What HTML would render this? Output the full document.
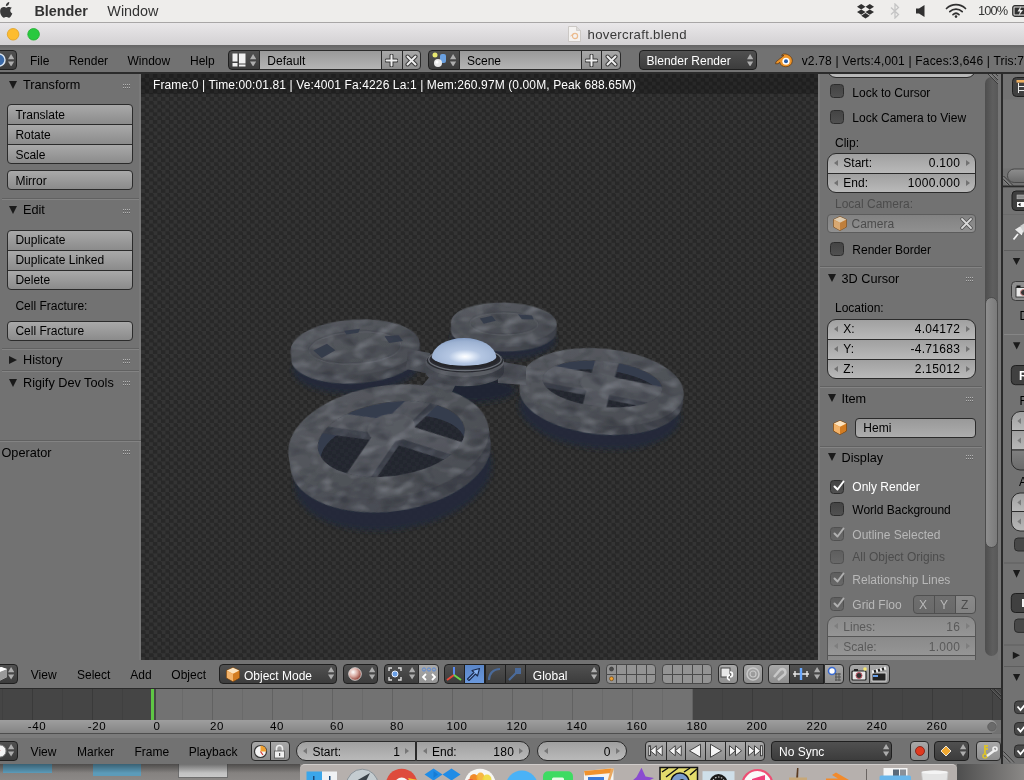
<!DOCTYPE html>
<html><head><meta charset="utf-8"><title>Blender</title>
<style>
*{box-sizing:border-box;margin:0;padding:0}
html,body{width:1024px;height:780px;overflow:hidden;background:#727272;font-family:"Liberation Sans",sans-serif;font-size:12px;color:#000}
.a{position:absolute}
.t{position:absolute;white-space:nowrap;line-height:14px;font-size:12px;color:#000}
.w{color:#fff}
.g{color:#4c4c4c}
.lg{color:#b8b8b8}
#menubar{left:0;top:0;width:1024px;height:22px;background:#ebebeb}
#titlebar{left:0;top:22px;width:1024px;height:24px;background:linear-gradient(#e9e7e9,#d2d0d2)}
#vp{background:repeating-conic-gradient(#282828 0 25%,#343434 0 50%) 0.13px 0/8.12px 7.68px}
.btn{border:1px solid #2b2b2b;background:linear-gradient(#a9a9a9,#8b8b8b)}
.num{border:1px solid #2b2b2b;background:linear-gradient(#a0a0a0,#b9b9b9)}
.dark{border:1px solid #1f1f1f;background:linear-gradient(#505050,#3c3c3c)}
.hl{height:2px !important;background:linear-gradient(#616161 50%,#838383 50%)}
.g2{color:#5a5a5a}

</style></head><body><div id="root" style="position:absolute;left:0;top:0;width:1024px;height:780px;overflow:hidden;will-change:transform">
<div class="a " style="left:0px;top:0px;width:1024px;height:22px;background:#eeedeb"></div>
<div class="a " style="left:0px;top:22px;width:1024px;height:1px;background:#a8a6a6"></div>
<div class="a " style="left:0px;top:23px;width:1024px;height:23px;background:linear-gradient(#e9e7e9,#e2e0e2 30%,#d2d0d2)"></div>
<div class="a " style="left:0px;top:46px;width:1024px;height:26px;background:#727272"></div>
<div class="a " style="left:0px;top:72px;width:1024px;height:2px;background:#2b2b2b"></div>
<div class="a " style="left:0px;top:74px;width:141px;height:586px;background:#727272"></div>
<div id="vp" class="a" style="left:141px;top:74px;width:678px;height:586px"></div>
<svg class="a" style="left:141px;top:74px" width="678" height="586" viewBox="141 74 678 586"><defs>
<pattern id="chk" width="8.12" height="7.68" patternUnits="userSpaceOnUse" x="141.13" y="74"><rect width="8.12" height="7.68" fill="#343434"/><rect x="4.06" width="4.06" height="3.84" fill="#282828"/><rect y="3.84" width="4.06" height="3.84" fill="#282828"/></pattern>
<filter id="b2" x="-20%" y="-30%" width="140%" height="160%"><feGaussianBlur stdDeviation="2.600"/></filter>
<filter id="b1"><feGaussianBlur stdDeviation="0.700"/></filter>
<linearGradient id="topg" x1="0" y1="0" x2="1" y2="1"><stop offset="0" stop-color="#585b61"/><stop offset="0.500" stop-color="#505359"/><stop offset="1" stop-color="#4a4d53"/></linearGradient>
<linearGradient id="sideg" x1="0" y1="0" x2="1" y2="0"><stop offset="0" stop-color="#50535a"/><stop offset="0.500" stop-color="#484b52"/><stop offset="1" stop-color="#3c3f47"/></linearGradient>
<linearGradient id="spk" x1="0" y1="0" x2="0" y2="1"><stop offset="0" stop-color="#5c5f66"/><stop offset="1" stop-color="#4e5158"/></linearGradient>
<radialGradient id="dome" cx="0.515" cy="0.670" r="0.720"><stop offset="0" stop-color="#ffffff"/><stop offset="0.120" stop-color="#e8f0fb"/><stop offset="0.350" stop-color="#b4c6e2"/><stop offset="0.750" stop-color="#9db2d2"/><stop offset="1" stop-color="#7d96be"/></radialGradient>
<filter id="mot" x="-5%" y="-5%" width="110%" height="110%" color-interpolation-filters="sRGB"><feTurbulence type="fractalNoise" baseFrequency="0.050 0.090" numOctaves="2" seed="11" result="n"/><feColorMatrix in="n" type="matrix" values="0 0 0 0 0.800  0 0 0 0 0.820  0 0 0 0 0.860  0.700 0 0 0 -0.340" result="w"/><feComposite in="w" in2="SourceAlpha" operator="in" result="wm"/><feColorMatrix in="n" type="matrix" values="0 0 0 0 0.080  0 0 0 0 0.090  0 0 0 0 0.130  0 0.800 0 0 -0.370" result="d"/><feComposite in="d" in2="SourceAlpha" operator="in" result="dm"/><feMerge><feMergeNode in="SourceGraphic"/><feMergeNode in="wm"/><feMergeNode in="dm"/></feMerge></filter>
</defs><g filter="url(#b1)"><g><g transform="translate(503.8,323) rotate(1)"><ellipse cx="0" cy="16" rx="52.007999999999996" ry="20.294999999999998" fill="#222a3b" opacity="0.920" filter="url(#b2)"/><g filter="url(#mot)"><path d="M-52.8,0 V8 A52.8,20.5 0 0 0 52.8,8 V0 Z" fill="url(#sideg)"/><ellipse cx="0" cy="0" rx="52.8" ry="20.5" fill="url(#topg)"/><ellipse cx="0" cy="0" rx="34" ry="11" fill="none" stroke="#44474e" stroke-width="1.500" opacity="0.600"/><ellipse cx="0" cy="1" rx="34" ry="11" fill="none" stroke="#6c6f76" stroke-width="1" opacity="0.500"/></g><polygon points="-24,-4 -12,-7 -8,-2 -20,1" fill="#333a4a" opacity="0.900"/><polygon points="14,-9 28,-8 30,-4 18,-4" fill="#333a4a" opacity="0.900"/></g><g transform="translate(355.2,347) rotate(-3.5)"><ellipse cx="0" cy="19" rx="63.63099999999999" ry="27.324" fill="#222a3b" opacity="0.920" filter="url(#b2)"/><g filter="url(#mot)"><path d="M-64.6,0 V9 A64.6,27.6 0 0 0 64.6,9 V0 Z" fill="url(#sideg)"/><ellipse cx="0" cy="0" rx="64.6" ry="27.6" fill="url(#topg)"/><ellipse cx="0" cy="0" rx="46" ry="16" fill="none" stroke="#44474e" stroke-width="1.500" opacity="0.600"/><ellipse cx="0" cy="1" rx="46" ry="16" fill="none" stroke="#6c6f76" stroke-width="1" opacity="0.500"/></g><polygon points="-42,1 -28,-5 -20,2 -34,9" fill="#333a4a" opacity="0.900"/><polygon points="30,-9 44,-9 48,-3 34,-2" fill="#333a4a" opacity="0.900"/><polygon points="-10,-17 6,-18 4,-14 -8,-13" fill="#333a4a" opacity="0.900"/></g><g transform="translate(602,387) rotate(5.5)"><ellipse cx="0" cy="24" rx="80.77" ry="38.115" fill="#222a3b" opacity="0.920" filter="url(#b2)"/><g filter="url(#mot)"><path d="M-82,0 V9 A82,38.5 0 0 0 82,9 V0 Z" fill="url(#sideg)"/></g><ellipse cx="0" cy="-3" rx="60" ry="23" fill="#343c4e"/><clipPath id="c602"><ellipse cx="0" cy="-3" rx="60" ry="23"/></clipPath><g clip-path="url(#c602)"><ellipse cx="0" cy="5.1" rx="59.1" ry="22.08" fill="url(#chk)"/><ellipse cx="0" cy="5.1" rx="59.1" ry="22.08" fill="#1a2232" opacity="0.45"/></g><g filter="url(#mot)"><g clip-path="url(#c602)"><line x1="-2" y1="1.9500000000000002" x2="-88.4" y2="-6.05" stroke="#3c404a" stroke-width="18" /><line x1="-2" y1="1.9500000000000002" x2="90.80000000000001" y2="11.55" stroke="#3c404a" stroke-width="18" /><line x1="-2" y1="1.9500000000000002" x2="4.4" y2="-30.05" stroke="#3c404a" stroke-width="23" /><line x1="-2" y1="1.9500000000000002" x2="-8.4" y2="38.75000000000001" stroke="#3c404a" stroke-width="23" /><line x1="-2" y1="-3" x2="-88.4" y2="-11.0" stroke="url(#spk)" stroke-width="18" /><line x1="-2" y1="-3" x2="90.80000000000001" y2="6.600000000000001" stroke="url(#spk)" stroke-width="18" /><line x1="-2" y1="-3" x2="4.4" y2="-35.0" stroke="url(#spk)" stroke-width="23" /><line x1="-2" y1="-3" x2="-8.4" y2="33.800000000000004" stroke="url(#spk)" stroke-width="23" /><ellipse cx="-2" cy="-3" rx="20" ry="11" fill="#585b62"/></g><path fill-rule="evenodd" d="M-82,0 A82,38.5 0 1 0 82,0 A82,38.5 0 1 0 -82,0 Z M-60,-3 A60,23 0 1 0 60,-3 A60,23 0 1 0 -60,-3 Z" fill="url(#topg)"/></g></g><ellipse cx="470" cy="390" rx="46" ry="13" fill="#1d2535" opacity="0.900" filter="url(#b2)"/><g filter="url(#mot)"><path d="M408 349 L430 353 L430 374 L406 369 Z" fill="#4e5158"/><path d="M498 361 L526 366 L526 385 L498 383 Z" fill="#4c4f56"/><path d="M432 374 L458 380 L452 392 L428 396 L422 386 Z" fill="#52555c"/><path d="M425.300 362 V372 A39.400,15 0 0 0 504,372 V362 Z" fill="url(#sideg)"/><ellipse cx="464.700" cy="362" rx="39.400" ry="15" fill="#5a5d64"/></g><g transform="translate(388.6,441.5) rotate(-8)"><ellipse cx="0" cy="33" rx="99.485" ry="55.44" fill="#222a3b" opacity="0.920" filter="url(#b2)"/><g filter="url(#mot)"><path d="M-101,0 V14 A101,56 0 0 0 101,14 V0 Z" fill="url(#sideg)"/></g><ellipse cx="3" cy="-2" rx="74" ry="37" fill="#343c4e"/><clipPath id="c388"><ellipse cx="3" cy="-2" rx="74" ry="37"/></clipPath><g clip-path="url(#c388)"><ellipse cx="3" cy="10.6" rx="72.89" ry="35.519999999999996" fill="url(#chk)"/><ellipse cx="3" cy="10.6" rx="72.89" ry="35.519999999999996" fill="#1a2232" opacity="0.45"/></g><g filter="url(#mot)"><g clip-path="url(#c388)"><line x1="4.5" y1="-5.499999999999998" x2="-83.66000000000001" y2="-30.46" stroke="#3c404a" stroke-width="15" /><line x1="4.5" y1="-5.499999999999998" x2="93.30000000000001" y2="36.900000000000006" stroke="#3c404a" stroke-width="15" /><line x1="4.5" y1="-5.499999999999998" x2="59.379999999999995" y2="-45.5" stroke="#3c404a" stroke-width="19" /><line x1="4.5" y1="-5.499999999999998" x2="-53.74" y2="58.5" stroke="#3c404a" stroke-width="22" /><line x1="4.5" y1="-13.2" x2="-83.66000000000001" y2="-38.160000000000004" stroke="url(#spk)" stroke-width="15" /><line x1="4.5" y1="-13.2" x2="93.30000000000001" y2="29.200000000000006" stroke="url(#spk)" stroke-width="15" /><line x1="4.5" y1="-13.2" x2="59.379999999999995" y2="-53.2" stroke="url(#spk)" stroke-width="19" /><line x1="4.5" y1="-13.2" x2="-53.74" y2="50.8" stroke="url(#spk)" stroke-width="22" /><ellipse cx="4.5" cy="-13.2" rx="24" ry="14" fill="#585b62"/></g><path fill-rule="evenodd" d="M-101,0 A101,56 0 1 0 101,0 A101,56 0 1 0 -101,0 Z M-71,-2 A74,37 0 1 0 77,-2 A74,37 0 1 0 -71,-2 Z" fill="url(#topg)"/></g></g></g><ellipse cx="465" cy="360.500" rx="38.300" ry="12" fill="#2a2c31"/><ellipse cx="465" cy="359.500" rx="36.300" ry="11" fill="none" stroke="#6a6e76" stroke-width="1.300"/><ellipse cx="465" cy="358.500" rx="34" ry="9.500" fill="#25272c"/><path d="M431.700 357 A32.400,20 0 0 1 496.400,357 A32.400,9.200 0 0 1 431.700,357 Z" fill="url(#dome)"/></g></svg>
<div class="a " style="left:141px;top:74px;width:678px;height:20px;background:rgba(0,0,0,0.22)"></div>
<div class="a " style="left:819px;top:74px;width:182px;height:586px;background:#727272"></div>
<div class="a " style="left:0px;top:660px;width:1001px;height:28px;background:#727272"></div>
<div class="a " style="left:0px;top:688px;width:1001px;height:2px;background:#2b2b2b"></div>
<div class="a " style="left:0px;top:690px;width:1001px;height:30px;background:#454545"></div>
<div class="a " style="left:0px;top:720px;width:1001px;height:14px;background:linear-gradient(#8f8f8f,#6e6e6e)"></div>
<div class="a " style="left:0px;top:734px;width:1001px;height:30px;background:#727272"></div>
<div class="a " style="left:0px;top:764px;width:1024px;height:16px;background:#7f7d7c"></div>
<div class="a " style="left:1001px;top:74px;width:3px;height:690px;background:#3a3a3a"></div>
<div class="a " style="left:1004px;top:74px;width:20px;height:690px;background:#727272"></div>
<div class="a " style="left:139px;top:74px;width:2px;height:586px;background:#797979"></div>
<div class="a " style="left:818px;top:74px;width:1.5px;height:586px;background:#7a7a7a"></div>
<svg class="a" style="left:9px;top:81px" width="8" height="8"><polygon points="0,0 8,0 4.0,8" fill="#1a1a1a"/></svg>
<div class="t " style="left:23px;top:78px;font-size:12.7px;">Transform</div>
<svg class="a" style="left:123px;top:84px" width="8" height="6"><rect x="0" y="0" width="1" height="1" fill="#b4b4b4"/><rect x="0" y="1" width="1" height="1" fill="#606060"/><rect x="2" y="0" width="1" height="1" fill="#b4b4b4"/><rect x="2" y="1" width="1" height="1" fill="#606060"/><rect x="4" y="0" width="1" height="1" fill="#b4b4b4"/><rect x="4" y="1" width="1" height="1" fill="#606060"/><rect x="6" y="0" width="1" height="1" fill="#b4b4b4"/><rect x="6" y="1" width="1" height="1" fill="#606060"/><rect x="0" y="3" width="1" height="1" fill="#b4b4b4"/><rect x="0" y="4" width="1" height="1" fill="#606060"/><rect x="2" y="3" width="1" height="1" fill="#b4b4b4"/><rect x="2" y="4" width="1" height="1" fill="#606060"/><rect x="4" y="3" width="1" height="1" fill="#b4b4b4"/><rect x="4" y="4" width="1" height="1" fill="#606060"/><rect x="6" y="3" width="1" height="1" fill="#b4b4b4"/><rect x="6" y="4" width="1" height="1" fill="#606060"/></svg>
<div class="a btn" style="left:7px;top:104px;width:126px;height:21px;border-radius:4px 4px 0 0;"></div>
<div class="t " style="left:15.4px;top:108px;font-size:12px;">Translate</div>
<div class="a btn" style="left:7px;top:124px;width:126px;height:21px;border-radius:0;"></div>
<div class="t " style="left:15.4px;top:128px;font-size:12px;">Rotate</div>
<div class="a btn" style="left:7px;top:144px;width:126px;height:20px;border-radius:0 0 4px 4px;"></div>
<div class="t " style="left:15.4px;top:148px;font-size:12px;">Scale</div>
<div class="a btn" style="left:7px;top:170px;width:126px;height:20px;border-radius:4px;"></div>
<div class="t " style="left:15.4px;top:174px;font-size:12px;">Mirror</div>
<div class="a hl" style="left:2px;top:198px;width:137px;height:1px;"></div>
<svg class="a" style="left:9px;top:206px" width="8" height="8"><polygon points="0,0 8,0 4.0,8" fill="#1a1a1a"/></svg>
<div class="t " style="left:23px;top:203px;font-size:12.7px;">Edit</div>
<svg class="a" style="left:123px;top:209px" width="8" height="6"><rect x="0" y="0" width="1" height="1" fill="#b4b4b4"/><rect x="0" y="1" width="1" height="1" fill="#606060"/><rect x="2" y="0" width="1" height="1" fill="#b4b4b4"/><rect x="2" y="1" width="1" height="1" fill="#606060"/><rect x="4" y="0" width="1" height="1" fill="#b4b4b4"/><rect x="4" y="1" width="1" height="1" fill="#606060"/><rect x="6" y="0" width="1" height="1" fill="#b4b4b4"/><rect x="6" y="1" width="1" height="1" fill="#606060"/><rect x="0" y="3" width="1" height="1" fill="#b4b4b4"/><rect x="0" y="4" width="1" height="1" fill="#606060"/><rect x="2" y="3" width="1" height="1" fill="#b4b4b4"/><rect x="2" y="4" width="1" height="1" fill="#606060"/><rect x="4" y="3" width="1" height="1" fill="#b4b4b4"/><rect x="4" y="4" width="1" height="1" fill="#606060"/><rect x="6" y="3" width="1" height="1" fill="#b4b4b4"/><rect x="6" y="4" width="1" height="1" fill="#606060"/></svg>
<div class="a btn" style="left:7px;top:229.5px;width:126px;height:21px;border-radius:4px 4px 0 0;"></div>
<div class="t " style="left:15.4px;top:233px;font-size:12px;">Duplicate</div>
<div class="a btn" style="left:7px;top:249.5px;width:126px;height:21px;border-radius:0;"></div>
<div class="t " style="left:15.4px;top:253px;font-size:12px;">Duplicate Linked</div>
<div class="a btn" style="left:7px;top:269.5px;width:126px;height:20px;border-radius:0 0 4px 4px;"></div>
<div class="t " style="left:15.4px;top:273px;font-size:12px;">Delete</div>
<div class="t " style="left:15.4px;top:299px;font-size:12px;">Cell Fracture:</div>
<div class="a btn" style="left:7px;top:320.5px;width:126px;height:20px;border-radius:4px;"></div>
<div class="t " style="left:15.4px;top:324px;font-size:12px;">Cell Fracture</div>
<div class="a hl" style="left:2px;top:348px;width:137px;height:1px;"></div>
<svg class="a" style="left:9px;top:356px" width="8" height="8"><polygon points="0,0 8,4.0 0,8" fill="#1a1a1a"/></svg>
<div class="t " style="left:23px;top:353px;font-size:12.7px;">History</div>
<svg class="a" style="left:123px;top:359px" width="8" height="6"><rect x="0" y="0" width="1" height="1" fill="#b4b4b4"/><rect x="0" y="1" width="1" height="1" fill="#606060"/><rect x="2" y="0" width="1" height="1" fill="#b4b4b4"/><rect x="2" y="1" width="1" height="1" fill="#606060"/><rect x="4" y="0" width="1" height="1" fill="#b4b4b4"/><rect x="4" y="1" width="1" height="1" fill="#606060"/><rect x="6" y="0" width="1" height="1" fill="#b4b4b4"/><rect x="6" y="1" width="1" height="1" fill="#606060"/><rect x="0" y="3" width="1" height="1" fill="#b4b4b4"/><rect x="0" y="4" width="1" height="1" fill="#606060"/><rect x="2" y="3" width="1" height="1" fill="#b4b4b4"/><rect x="2" y="4" width="1" height="1" fill="#606060"/><rect x="4" y="3" width="1" height="1" fill="#b4b4b4"/><rect x="4" y="4" width="1" height="1" fill="#606060"/><rect x="6" y="3" width="1" height="1" fill="#b4b4b4"/><rect x="6" y="4" width="1" height="1" fill="#606060"/></svg>
<div class="a hl" style="left:2px;top:370px;width:137px;height:1px;"></div>
<svg class="a" style="left:9px;top:379px" width="8" height="8"><polygon points="0,0 8,0 4.0,8" fill="#1a1a1a"/></svg>
<div class="t " style="left:23px;top:376px;font-size:12.7px;">Rigify Dev Tools</div>
<svg class="a" style="left:123px;top:381px" width="8" height="6"><rect x="0" y="0" width="1" height="1" fill="#b4b4b4"/><rect x="0" y="1" width="1" height="1" fill="#606060"/><rect x="2" y="0" width="1" height="1" fill="#b4b4b4"/><rect x="2" y="1" width="1" height="1" fill="#606060"/><rect x="4" y="0" width="1" height="1" fill="#b4b4b4"/><rect x="4" y="1" width="1" height="1" fill="#606060"/><rect x="6" y="0" width="1" height="1" fill="#b4b4b4"/><rect x="6" y="1" width="1" height="1" fill="#606060"/><rect x="0" y="3" width="1" height="1" fill="#b4b4b4"/><rect x="0" y="4" width="1" height="1" fill="#606060"/><rect x="2" y="3" width="1" height="1" fill="#b4b4b4"/><rect x="2" y="4" width="1" height="1" fill="#606060"/><rect x="4" y="3" width="1" height="1" fill="#b4b4b4"/><rect x="4" y="4" width="1" height="1" fill="#606060"/><rect x="6" y="3" width="1" height="1" fill="#b4b4b4"/><rect x="6" y="4" width="1" height="1" fill="#606060"/></svg>
<div class="a hl" style="left:0px;top:440px;width:141px;height:1px;"></div>
<div class="t " style="left:1.5px;top:446px;font-size:12.7px;">Operator</div>
<svg class="a" style="left:123px;top:450px" width="8" height="6"><rect x="0" y="0" width="1" height="1" fill="#b4b4b4"/><rect x="0" y="1" width="1" height="1" fill="#606060"/><rect x="2" y="0" width="1" height="1" fill="#b4b4b4"/><rect x="2" y="1" width="1" height="1" fill="#606060"/><rect x="4" y="0" width="1" height="1" fill="#b4b4b4"/><rect x="4" y="1" width="1" height="1" fill="#606060"/><rect x="6" y="0" width="1" height="1" fill="#b4b4b4"/><rect x="6" y="1" width="1" height="1" fill="#606060"/><rect x="0" y="3" width="1" height="1" fill="#b4b4b4"/><rect x="0" y="4" width="1" height="1" fill="#606060"/><rect x="2" y="3" width="1" height="1" fill="#b4b4b4"/><rect x="2" y="4" width="1" height="1" fill="#606060"/><rect x="4" y="3" width="1" height="1" fill="#b4b4b4"/><rect x="4" y="4" width="1" height="1" fill="#606060"/><rect x="6" y="3" width="1" height="1" fill="#b4b4b4"/><rect x="6" y="4" width="1" height="1" fill="#606060"/></svg>
<div class="a num" style="left:827px;top:58px;width:149px;height:20px;border-radius:9px;"></div>
<div class="t " style="left:843.3px;top:62px;font-size:12px;"></div>
<div class="t " style="right:63.799999999999955px;top:62px;font-size:12px;letter-spacing:0.3px;"></div>
<svg class="a" style="left:833.5px;top:65px" width="4" height="6"><polygon points="4,0 4,6 0,3" fill="#727272"/></svg>
<svg class="a" style="left:965.5px;top:65px" width="4" height="6"><polygon points="0,0 0,6 4,3" fill="#727272"/></svg>
<div class="a " style="left:830px;top:84px;width:14px;height:14px;background:linear-gradient(#444,#505050);border:1px solid #2c2c2c;border-radius:3.5px;"></div>
<div class="t " style="left:852.3px;top:86px;font-size:12px;">Lock to Cursor</div>
<div class="a " style="left:830px;top:110px;width:14px;height:14px;background:linear-gradient(#444,#505050);border:1px solid #2c2c2c;border-radius:3.5px;"></div>
<div class="t " style="left:852.3px;top:111px;font-size:12px;">Lock Camera to View</div>
<div class="t " style="left:835px;top:136px;font-size:12px;">Clip:</div>
<div class="a num" style="left:827px;top:152.5px;width:149px;height:21px;border-radius:9px 9px 0 0;"></div>
<div class="t " style="left:843.3px;top:156px;font-size:12px;">Start:</div>
<div class="t " style="right:63.799999999999955px;top:156px;font-size:12px;letter-spacing:0.3px;">0.100</div>
<svg class="a" style="left:833.5px;top:159.5px" width="4" height="6"><polygon points="4,0 4,6 0,3" fill="#727272"/></svg>
<svg class="a" style="left:965.5px;top:159.5px" width="4" height="6"><polygon points="0,0 0,6 4,3" fill="#727272"/></svg>
<div class="a num" style="left:827px;top:172.5px;width:149px;height:20px;border-radius:0 0 9px 9px;"></div>
<div class="t " style="left:843.3px;top:176px;font-size:12px;">End:</div>
<div class="t " style="right:63.799999999999955px;top:176px;font-size:12px;letter-spacing:0.3px;">1000.000</div>
<svg class="a" style="left:833.5px;top:179.5px" width="4" height="6"><polygon points="4,0 4,6 0,3" fill="#727272"/></svg>
<svg class="a" style="left:965.5px;top:179.5px" width="4" height="6"><polygon points="0,0 0,6 4,3" fill="#727272"/></svg>
<div class="t g" style="left:835px;top:197px;font-size:12px;">Local Camera:</div>
<div class="a " style="left:827px;top:213.5px;width:149px;height:19px;border:1px solid #5c5c5c;border-radius:4px;background:linear-gradient(#828282,#909090)"></div>
<svg class="a" style="left:833px;top:216px;opacity:0.75" width="14" height="15" viewBox="0 0 14 15"><polygon points="7,0.5 13.5,3.5 13.5,11 7,14.5 0.5,11 0.5,3.5" fill="#e8953a" stroke="#7a4a18" stroke-width="1"/><polygon points="7,0.8 13.2,3.6 7,6.8 0.8,3.6" fill="#fbe3c0"/><polygon points="0.8,3.9 7,7 7,14.2 0.8,10.8" fill="#f3b36a"/><polygon points="7,7 13.2,3.9 13.2,10.8 7,14.2" fill="#d27c22"/></svg>
<div class="t g" style="left:851.5px;top:217px;font-size:12px;">Camera</div>
<svg class="a" style="left:960px;top:217px" width="13" height="13" viewBox="0 0 13 13"><path d="M2 2 L11 11 M11 2 L2 11" stroke="#505050" stroke-width="3.4" stroke-linecap="round"/><path d="M2 2 L11 11 M11 2 L2 11" stroke="#d8d8d8" stroke-width="1.8" stroke-linecap="round"/></svg>
<div class="a " style="left:830px;top:242px;width:14px;height:14px;background:linear-gradient(#444,#505050);border:1px solid #2c2c2c;border-radius:3.5px;"></div>
<div class="t " style="left:852.3px;top:243px;font-size:12px;">Render Border</div>
<div class="a hl" style="left:820px;top:266px;width:162px;height:1px;"></div>
<svg class="a" style="left:828px;top:274px" width="8" height="8"><polygon points="0,0 8,0 4.0,8" fill="#1a1a1a"/></svg>
<div class="t " style="left:841.5px;top:272px;font-size:12.7px;">3D Cursor</div>
<svg class="a" style="left:966px;top:277px" width="8" height="6"><rect x="0" y="0" width="1" height="1" fill="#b4b4b4"/><rect x="0" y="1" width="1" height="1" fill="#606060"/><rect x="2" y="0" width="1" height="1" fill="#b4b4b4"/><rect x="2" y="1" width="1" height="1" fill="#606060"/><rect x="4" y="0" width="1" height="1" fill="#b4b4b4"/><rect x="4" y="1" width="1" height="1" fill="#606060"/><rect x="6" y="0" width="1" height="1" fill="#b4b4b4"/><rect x="6" y="1" width="1" height="1" fill="#606060"/><rect x="0" y="3" width="1" height="1" fill="#b4b4b4"/><rect x="0" y="4" width="1" height="1" fill="#606060"/><rect x="2" y="3" width="1" height="1" fill="#b4b4b4"/><rect x="2" y="4" width="1" height="1" fill="#606060"/><rect x="4" y="3" width="1" height="1" fill="#b4b4b4"/><rect x="4" y="4" width="1" height="1" fill="#606060"/><rect x="6" y="3" width="1" height="1" fill="#b4b4b4"/><rect x="6" y="4" width="1" height="1" fill="#606060"/></svg>
<div class="t " style="left:835px;top:301px;font-size:12px;">Location:</div>
<div class="a num" style="left:827px;top:318.5px;width:149px;height:21px;border-radius:9px 9px 0 0;"></div>
<div class="t " style="left:843.3px;top:322px;font-size:12px;">X:</div>
<div class="t " style="right:63.799999999999955px;top:322px;font-size:12px;letter-spacing:0.3px;">4.04172</div>
<svg class="a" style="left:833.5px;top:325.5px" width="4" height="6"><polygon points="4,0 4,6 0,3" fill="#727272"/></svg>
<svg class="a" style="left:965.5px;top:325.5px" width="4" height="6"><polygon points="0,0 0,6 4,3" fill="#727272"/></svg>
<div class="a num" style="left:827px;top:338.5px;width:149px;height:21px;border-radius:0;"></div>
<div class="t " style="left:843.3px;top:342px;font-size:12px;">Y:</div>
<div class="t " style="right:63.799999999999955px;top:342px;font-size:12px;letter-spacing:0.3px;">-4.71683</div>
<svg class="a" style="left:833.5px;top:345.5px" width="4" height="6"><polygon points="4,0 4,6 0,3" fill="#727272"/></svg>
<svg class="a" style="left:965.5px;top:345.5px" width="4" height="6"><polygon points="0,0 0,6 4,3" fill="#727272"/></svg>
<div class="a num" style="left:827px;top:358.5px;width:149px;height:20px;border-radius:0 0 9px 9px;"></div>
<div class="t " style="left:843.3px;top:362px;font-size:12px;">Z:</div>
<div class="t " style="right:63.799999999999955px;top:362px;font-size:12px;letter-spacing:0.3px;">2.15012</div>
<svg class="a" style="left:833.5px;top:365.5px" width="4" height="6"><polygon points="4,0 4,6 0,3" fill="#727272"/></svg>
<svg class="a" style="left:965.5px;top:365.5px" width="4" height="6"><polygon points="0,0 0,6 4,3" fill="#727272"/></svg>
<div class="a hl" style="left:820px;top:386px;width:162px;height:1px;"></div>
<svg class="a" style="left:828px;top:394px" width="8" height="8"><polygon points="0,0 8,0 4.0,8" fill="#1a1a1a"/></svg>
<div class="t " style="left:841.5px;top:392px;font-size:12.7px;">Item</div>
<svg class="a" style="left:966px;top:397px" width="8" height="6"><rect x="0" y="0" width="1" height="1" fill="#b4b4b4"/><rect x="0" y="1" width="1" height="1" fill="#606060"/><rect x="2" y="0" width="1" height="1" fill="#b4b4b4"/><rect x="2" y="1" width="1" height="1" fill="#606060"/><rect x="4" y="0" width="1" height="1" fill="#b4b4b4"/><rect x="4" y="1" width="1" height="1" fill="#606060"/><rect x="6" y="0" width="1" height="1" fill="#b4b4b4"/><rect x="6" y="1" width="1" height="1" fill="#606060"/><rect x="0" y="3" width="1" height="1" fill="#b4b4b4"/><rect x="0" y="4" width="1" height="1" fill="#606060"/><rect x="2" y="3" width="1" height="1" fill="#b4b4b4"/><rect x="2" y="4" width="1" height="1" fill="#606060"/><rect x="4" y="3" width="1" height="1" fill="#b4b4b4"/><rect x="4" y="4" width="1" height="1" fill="#606060"/><rect x="6" y="3" width="1" height="1" fill="#b4b4b4"/><rect x="6" y="4" width="1" height="1" fill="#606060"/></svg>
<svg class="a" style="left:833px;top:420px;opacity:1" width="14" height="15" viewBox="0 0 14 15"><polygon points="7,0.5 13.5,3.5 13.5,11 7,14.5 0.5,11 0.5,3.5" fill="#e8953a" stroke="#7a4a18" stroke-width="1"/><polygon points="7,0.8 13.2,3.6 7,6.8 0.8,3.6" fill="#fbe3c0"/><polygon points="0.8,3.9 7,7 7,14.2 0.8,10.8" fill="#f3b36a"/><polygon points="7,7 13.2,3.9 13.2,10.8 7,14.2" fill="#d27c22"/></svg>
<div class="a " style="left:855px;top:417.5px;width:121px;height:20px;border:1px solid #2b2b2b;border-radius:4px;background:linear-gradient(#999,#adadad)"></div>
<div class="t " style="left:863.3px;top:421px;font-size:12px;">Hemi</div>
<div class="a hl" style="left:820px;top:446px;width:162px;height:1px;"></div>
<svg class="a" style="left:828px;top:452.5px" width="8" height="8"><polygon points="0,0 8,0 4.0,8" fill="#1a1a1a"/></svg>
<div class="t " style="left:841.5px;top:451px;font-size:12.7px;">Display</div>
<svg class="a" style="left:966px;top:455px" width="8" height="6"><rect x="0" y="0" width="1" height="1" fill="#b4b4b4"/><rect x="0" y="1" width="1" height="1" fill="#606060"/><rect x="2" y="0" width="1" height="1" fill="#b4b4b4"/><rect x="2" y="1" width="1" height="1" fill="#606060"/><rect x="4" y="0" width="1" height="1" fill="#b4b4b4"/><rect x="4" y="1" width="1" height="1" fill="#606060"/><rect x="6" y="0" width="1" height="1" fill="#b4b4b4"/><rect x="6" y="1" width="1" height="1" fill="#606060"/><rect x="0" y="3" width="1" height="1" fill="#b4b4b4"/><rect x="0" y="4" width="1" height="1" fill="#606060"/><rect x="2" y="3" width="1" height="1" fill="#b4b4b4"/><rect x="2" y="4" width="1" height="1" fill="#606060"/><rect x="4" y="3" width="1" height="1" fill="#b4b4b4"/><rect x="4" y="4" width="1" height="1" fill="#606060"/><rect x="6" y="3" width="1" height="1" fill="#b4b4b4"/><rect x="6" y="4" width="1" height="1" fill="#606060"/></svg>
<div class="a " style="left:830px;top:479.5px;width:14px;height:14px;background:linear-gradient(#444,#505050);border:1px solid #2c2c2c;border-radius:3.5px;"><svg class="a" style="left:0px;top:-3px" width="16" height="16" viewBox="0 0 16 16"><path d="M3.5 8.5 L6.5 11.5 L12.5 3.5" fill="none" stroke="#fff" stroke-width="2" stroke-linecap="round" stroke-linejoin="round"/></svg></div>
<div class="t w" style="left:852.3px;top:480px;font-size:12px;">Only Render</div>
<div class="a " style="left:830px;top:501.5px;width:14px;height:14px;background:linear-gradient(#444,#505050);border:1px solid #2c2c2c;border-radius:3.5px;"></div>
<div class="t " style="left:852.3px;top:503px;font-size:12px;">World Background</div>
<div class="a " style="left:830px;top:527px;width:14px;height:14px;background:linear-gradient(#5e5e5e,#686868);border:1px solid #505050;border-radius:3.5px;"><svg class="a" style="left:0px;top:-3px" width="16" height="16" viewBox="0 0 16 16"><path d="M3.5 8.5 L6.5 11.5 L12.5 3.5" fill="none" stroke="#b0b0b0" stroke-width="2" stroke-linecap="round" stroke-linejoin="round"/></svg></div>
<div class="t lg" style="left:852.3px;top:528px;font-size:12px;">Outline Selected</div>
<div class="a " style="left:830px;top:549.5px;width:14px;height:14px;background:linear-gradient(#5e5e5e,#686868);border:1px solid #505050;border-radius:3.5px;"></div>
<div class="t g" style="left:852.3px;top:550px;font-size:12px;">All Object Origins</div>
<div class="a " style="left:830px;top:572px;width:14px;height:14px;background:linear-gradient(#5e5e5e,#686868);border:1px solid #505050;border-radius:3.5px;"><svg class="a" style="left:0px;top:-3px" width="16" height="16" viewBox="0 0 16 16"><path d="M3.5 8.5 L6.5 11.5 L12.5 3.5" fill="none" stroke="#b0b0b0" stroke-width="2" stroke-linecap="round" stroke-linejoin="round"/></svg></div>
<div class="t lg" style="left:852.3px;top:573px;font-size:12px;">Relationship Lines</div>
<div class="a " style="left:830px;top:596.5px;width:14px;height:14px;background:linear-gradient(#5e5e5e,#686868);border:1px solid #505050;border-radius:3.5px;"><svg class="a" style="left:0px;top:-3px" width="16" height="16" viewBox="0 0 16 16"><path d="M3.5 8.5 L6.5 11.5 L12.5 3.5" fill="none" stroke="#b0b0b0" stroke-width="2" stroke-linecap="round" stroke-linejoin="round"/></svg></div>
<div class="t lg" style="left:852.3px;top:598px;font-size:12px;">Grid Floo</div>
<div class="a " style="left:912.5px;top:594.5px;width:22px;height:19.5px;border:1px solid #505050;border-radius:4px 0 0 4px;background:linear-gradient(#6f6f6f,#696969)"></div>
<div class="t lg" style="left:919.0px;top:598px;font-size:12px;">X</div>
<div class="a " style="left:933.5px;top:594.5px;width:22px;height:19.5px;border:1px solid #505050;border-radius:0;background:linear-gradient(#6f6f6f,#696969)"></div>
<div class="t lg" style="left:940.0px;top:598px;font-size:12px;">Y</div>
<div class="a " style="left:954.5px;top:594.5px;width:21px;height:19.5px;border:1px solid #505050;border-radius:0 4px 4px 0;background:linear-gradient(#8a8a8a,#828282)"></div>
<div class="t g" style="left:961.0px;top:598px;font-size:12px;">Z</div>
<div class="a num" style="left:827px;top:616.3px;width:149px;height:20.5px;border-radius:9px 9px 0 0;border-color:#565656;background:linear-gradient(#8a8a8a,#959595);"></div>
<div class="t g2" style="left:843.3px;top:620px;font-size:12px;">Lines:</div>
<div class="t g2" style="right:63.799999999999955px;top:620px;font-size:12px;letter-spacing:0.3px;">16</div>
<svg class="a" style="left:833.5px;top:623.3px" width="4" height="6"><polygon points="4,0 4,6 0,3" fill="#7e7e7e"/></svg>
<svg class="a" style="left:965.5px;top:623.3px" width="4" height="6"><polygon points="0,0 0,6 4,3" fill="#7e7e7e"/></svg>
<div class="a num" style="left:827px;top:635.8px;width:149px;height:20.5px;border-radius:0;border-color:#565656;background:linear-gradient(#8a8a8a,#959595);"></div>
<div class="t g2" style="left:843.3px;top:640px;font-size:12px;">Scale:</div>
<div class="t g2" style="right:63.799999999999955px;top:640px;font-size:12px;letter-spacing:0.3px;">1.000</div>
<svg class="a" style="left:833.5px;top:642.8px" width="4" height="6"><polygon points="4,0 4,6 0,3" fill="#7e7e7e"/></svg>
<svg class="a" style="left:965.5px;top:642.8px" width="4" height="6"><polygon points="0,0 0,6 4,3" fill="#7e7e7e"/></svg>
<div class="a num" style="left:827px;top:655.3px;width:149px;height:19.5px;border-radius:0 0 9px 9px;border-color:#565656;background:linear-gradient(#8a8a8a,#959595);"></div>
<div class="t g2" style="left:843.3px;top:659px;font-size:12px;"></div>
<div class="t g2" style="right:63.799999999999955px;top:659px;font-size:12px;letter-spacing:0.3px;"></div>
<svg class="a" style="left:833.5px;top:662.3px" width="4" height="6"><polygon points="4,0 4,6 0,3" fill="#7e7e7e"/></svg>
<svg class="a" style="left:965.5px;top:662.3px" width="4" height="6"><polygon points="0,0 0,6 4,3" fill="#7e7e7e"/></svg>
<div class="a " style="left:984.5px;top:77px;width:13px;height:579px;background:linear-gradient(90deg,#4e4e4e,#5e5e5e 60%,#585858);border-radius:6.5px"></div>
<div class="a " style="left:984.5px;top:296.5px;width:13px;height:251px;background:linear-gradient(90deg,#8e8e8e,#7a7a7a);border-radius:6.5px;border:1px solid #4c4c4c"></div>
<svg class="a" style="left:986px;top:74px" width="15" height="15"><path d="M2 0 L15 13 M6 0 L15 9 M10 0 L15 5" stroke="#3a3a3a" stroke-width="1"/><path d="M3.2 0 L15 11.800 M7.200 0 L15 7.800 M11.200 0 L15 3.800" stroke="#8a8a8a" stroke-width="0.800"/></svg>
<div class="a " style="left:0px;top:45.4px;width:1024px;height:26.6px;background:linear-gradient(#646464,#727272 4px)"></div>
<div class="a " style="left:0px;top:72px;width:1024px;height:2px;background:#2b2b2b"></div>
<div class="a dark" style="left:-8px;top:50px;width:24.5px;height:19.5px;border-radius:4px;"></div>
<svg class="a" style="left:-8px;top:53px" width="14" height="14"><circle cx="7" cy="7" r="6" fill="#3b6aa8" stroke="#d8e4f0" stroke-width="1.5"/></svg>
<svg class="a" style="left:7.700000000000001px;top:53.6px" width="6.2" height="12.600000000000001"><polygon points="3.1,0 6.2,5.2 0,5.2" fill="#adadad"/><polygon points="0,7.4 6.2,7.4 3.1,12.600000000000001" fill="#adadad"/></svg>
<div class="t " style="left:30px;top:54px;font-size:12px;">File</div>
<div class="t " style="left:68.7px;top:54px;font-size:12px;">Render</div>
<div class="t " style="left:127.5px;top:54px;font-size:12px;">Window</div>
<div class="t " style="left:190px;top:54px;font-size:12px;">Help</div>
<div class="a dark" style="left:227.5px;top:50px;width:32px;height:19.5px;border-radius:4px 0 0 4px;"></div>
<svg class="a" style="left:232px;top:53px" width="14" height="14"><rect x="0.5" y="0.5" width="5" height="8" fill="#f0f0f0"/><rect x="0.5" y="10" width="5" height="3.5" fill="#f0f0f0"/><rect x="7" y="0.5" width="6.5" height="10" fill="#f0f0f0"/><rect x="7" y="11.5" width="6.5" height="2" fill="#f0f0f0"/></svg>
<svg class="a" style="left:249.9px;top:53.6px" width="6.2" height="12.600000000000001"><polygon points="3.1,0 6.2,5.2 0,5.2" fill="#adadad"/><polygon points="0,7.4 6.2,7.4 3.1,12.600000000000001" fill="#adadad"/></svg>
<div class="a " style="left:258.5px;top:50px;width:123px;height:19.5px;border:1px solid #2b2b2b;border-radius:0;background:linear-gradient(#999,#b4b4b4);"></div>
<div class="t " style="left:267.3px;top:54px;font-size:12px;">Default</div>
<div class="a " style="left:380.5px;top:50px;width:22px;height:19.5px;border:1px solid #2b2b2b;border-radius:0;background:linear-gradient(#a8a8a8,#8e8e8e);"></div>
<svg class="a" style="left:385px;top:53.5px" width="13" height="13" viewBox="0 0 13 13"><path d="M6.5 1.5 V11.5 M1.5 6.5 H11.5" stroke="#3a3a3a" stroke-width="4" stroke-linecap="round"/><path d="M6.5 1.5 V11.5 M1.5 6.5 H11.5" stroke="#eee" stroke-width="2" stroke-linecap="round"/></svg>
<div class="a " style="left:401.5px;top:50px;width:19.5px;height:19.5px;border:1px solid #2b2b2b;border-radius:0 4px 4px 0;background:linear-gradient(#a8a8a8,#8e8e8e);"></div>
<svg class="a" style="left:405px;top:53.5px" width="13" height="13" viewBox="0 0 13 13"><path d="M2.5 2.5 L10.5 10.5 M10.5 2.5 L2.5 10.5" stroke="#3a3a3a" stroke-width="4" stroke-linecap="round"/><path d="M2.5 2.5 L10.5 10.5 M10.5 2.5 L2.5 10.5" stroke="#eee" stroke-width="2" stroke-linecap="round"/></svg>
<div class="a dark" style="left:427.5px;top:50px;width:32px;height:19.5px;border-radius:4px 0 0 4px;"></div>
<svg class="a" style="left:432px;top:52px" width="16" height="16"><circle cx="3" cy="3" r="2.5" fill="#e8e870"/><rect x="8" y="2" width="6" height="9" rx="2" fill="#6aa0e0"/><circle cx="6" cy="11" r="4" fill="#e8e8e8"/><circle cx="5" cy="10" r="1.5" fill="#fff"/></svg>
<svg class="a" style="left:449.9px;top:53.6px" width="6.2" height="12.600000000000001"><polygon points="3.1,0 6.2,5.2 0,5.2" fill="#adadad"/><polygon points="0,7.4 6.2,7.4 3.1,12.600000000000001" fill="#adadad"/></svg>
<div class="a " style="left:458.5px;top:50px;width:123px;height:19.5px;border:1px solid #2b2b2b;border-radius:0;background:linear-gradient(#999,#b4b4b4);"></div>
<div class="t " style="left:467px;top:54px;font-size:12px;">Scene</div>
<div class="a " style="left:580.5px;top:50px;width:21.5px;height:19.5px;border:1px solid #2b2b2b;border-radius:0;background:linear-gradient(#a8a8a8,#8e8e8e);"></div>
<svg class="a" style="left:584.5px;top:53.5px" width="13" height="13" viewBox="0 0 13 13"><path d="M6.5 1.5 V11.5 M1.5 6.5 H11.5" stroke="#3a3a3a" stroke-width="4" stroke-linecap="round"/><path d="M6.5 1.5 V11.5 M1.5 6.5 H11.5" stroke="#eee" stroke-width="2" stroke-linecap="round"/></svg>
<div class="a " style="left:601px;top:50px;width:20px;height:19.5px;border:1px solid #2b2b2b;border-radius:0 4px 4px 0;background:linear-gradient(#a8a8a8,#8e8e8e);"></div>
<svg class="a" style="left:604.5px;top:53.5px" width="13" height="13" viewBox="0 0 13 13"><path d="M2.5 2.5 L10.5 10.5 M10.5 2.5 L2.5 10.5" stroke="#3a3a3a" stroke-width="4" stroke-linecap="round"/><path d="M2.5 2.5 L10.5 10.5 M10.5 2.5 L2.5 10.5" stroke="#eee" stroke-width="2" stroke-linecap="round"/></svg>
<div class="a dark" style="left:638.5px;top:50px;width:118px;height:19.5px;border-radius:4px;"></div>
<div class="t w" style="left:646.6px;top:54px;font-size:12px;">Blender Render</div>
<svg class="a" style="left:746.9px;top:53.6px" width="6.2" height="12.600000000000001"><polygon points="3.1,0 6.2,5.2 0,5.2" fill="#adadad"/><polygon points="0,7.4 6.2,7.4 3.1,12.600000000000001" fill="#adadad"/></svg>
<svg class="a" style="left:774.6px;top:52.800px" width="18" height="15" viewBox="0 0 18 14.500"><path d="M1 8.5 L9 2.2 L6.5 2.2 L8 0.8 L11 0.8 C15 2 17.5 4.5 17.3 8 C17 11.5 14 13.5 10.8 13.5 C7.5 13.5 5 11.5 4.8 9 L3 10.5 L0.5 10.5 Z" fill="#ee952a" stroke="#5a3410" stroke-width="0.700"/><circle cx="11" cy="8" r="3.6" fill="#fff"/><circle cx="11" cy="8" r="2" fill="#2a5fa8"/></svg>
<div class="t " style="left:801.7px;top:54px;font-size:12px;letter-spacing:0.18px;">v2.78 | Verts:4,001 | Faces:3,646 | Tris:7,254</div>
<div class="t w" style="left:153px;top:78px;font-size:12px;letter-spacing:0.115px;">Frame:0 | Time:00:01.81 | Ve:4001 Fa:4226 La:1 | Mem:260.97M (0.00M, Peak 688.65M)</div>
<svg class="a" style="left:0px;top:2px" width="14" height="17" viewBox="0 0 14 17"><path d="M9.3 0 C9.4 1.2 8.9 2.2 8.3 2.9 C7.6 3.6 6.700 4.100 5.900 4.000 C5.800 2.900 6.300 1.900 6.900 1.300 C7.600 0.500 8.600 0.050 9.300 0 Z M11.900 5.800 C10.900 6.400 10.300 7.300 10.300 8.500 C10.300 9.900 11.100 10.900 12.300 11.400 C12.000 12.300 11.600 13.100 11.000 13.900 C10.400 14.800 9.700 15.700 8.700 15.700 C7.700 15.700 7.400 15.100 6.300 15.100 C5.200 15.100 4.800 15.700 3.900 15.700 C2.900 15.700 2.200 14.800 1.500 13.800 C0.300 12.000 -0.500 8.900 0.700 6.800 C1.300 5.700 2.500 5.000 3.700 5.000 C4.700 5.000 5.600 5.700 6.200 5.700 C6.800 5.700 7.900 4.900 9.100 5.000 C9.600 5.000 11.000 5.200 11.900 5.800 Z" fill="#3a3a3a"/></svg>
<div class="t " style="left:34.4px;top:4px;font-size:14.4px;font-weight:bold;color:#333;">Blender</div>
<div class="t " style="left:107.3px;top:4px;font-size:14.4px;color:#333;">Window</div>
<svg class="a" style="left:857px;top:3.5px" width="17" height="16" viewBox="0 0 17 16"><g fill="#303030"><polygon points="4.25,0 8.5,2.7 4.25,5.4 0,2.7"/><polygon points="12.75,0 17,2.7 12.75,5.4 8.5,2.7"/><polygon points="4.25,5.4 8.5,8.1 4.25,10.8 0,8.1"/><polygon points="12.75,5.4 17,8.1 12.75,10.8 8.5,8.1"/><polygon points="4.25,11.7 8.5,9 12.75,11.7 8.5,14.4"/></g></svg>
<svg class="a" style="left:890px;top:3px" width="10" height="16" viewBox="0 0 10 16"><path d="M1 4.500 L8.500 11.500 L5 15 L5 1 L8.500 4.500 L1 11.500" fill="none" stroke="#c4c4c4" stroke-width="1.300"/></svg>
<svg class="a" style="left:916px;top:5px" width="9" height="12" viewBox="0 0 9 12"><polygon points="0,3.500 3,3.500 8.500,0 8.500,12 3,8.500 0,8.500" fill="#303030"/></svg>
<svg class="a" style="left:945px;top:3px" width="22" height="15" viewBox="0 0 22 15"><g fill="none" stroke="#303030" stroke-width="1.700" stroke-linecap="round"><path d="M1.500 5.500 A13.500 13.500 0 0 1 20.500 5.500"/><path d="M4.800 8.600 A9 9 0 0 1 17.200 8.600"/><path d="M8 11.600 A4.500 4.500 0 0 1 14 11.600"/></g><circle cx="11" cy="13.600" r="1.300" fill="#303030"/></svg>
<div class="t " style="left:978px;top:4px;font-size:12.8px;letter-spacing:-0.85px;color:#333;">100%</div>
<svg class="a" style="left:1012px;top:5px" width="14" height="12" viewBox="0 0 14 12"><rect x="0.800" y="0.800" width="20" height="10.400" rx="2" fill="none" stroke="#303030" stroke-width="1.400"/><rect x="2.500" y="2.500" width="12" height="7" fill="#303030"/><polygon points="9,1 5.500,6.500 8,6.500 6.500,11 11,5 8.300,5" fill="#ebebeb"/></svg>
<svg class="a" style="left:0px;top:23px" width="60" height="23"><circle cx="13.1" cy="11.3" r="5.800" fill="#fdbc2f" stroke="#dfa023" stroke-width="0.800"/><circle cx="33.600" cy="11.300" r="5.800" fill="#29c93f" stroke="#1dad2b" stroke-width="0.800"/></svg>
<svg class="a" style="left:568px;top:26px" width="13" height="16" viewBox="0 0 13 16"><path d="M0.500 0.500 H8.500 L12.500 4.500 V15.500 H0.500 Z" fill="#f4f2f0" stroke="#c4c0bc" stroke-width="0.800"/><path d="M8.500 0.500 V4.500 H12.500" fill="#dcdad8" stroke="#c4c0bc" stroke-width="0.600"/><circle cx="7" cy="10" r="2.600" fill="none" stroke="#ecbc90" stroke-width="1.200"/><path d="M2.500 10 L6 7.500" stroke="#ecbc90" stroke-width="1"/></svg>
<div class="t " style="left:587.5px;top:28px;font-size:13.2px;letter-spacing:0.3px;color:#383838;">hovercraft.blend</div>
<div class="a " style="left:0px;top:660px;width:1001px;height:28px;background:#727272"></div>
<div class="a dark" style="left:-8px;top:664px;width:25.5px;height:19.5px;border-radius:4px;"></div>
<svg class="a" style="left:-7px;top:667px" width="14" height="14" viewBox="0 0 14 14"><polygon points="0,3 8,0 14,2 14,10 6,14 0,11" fill="#e8e8e8"/><polygon points="6,5 14,2 14,10 6,14" fill="#9a9a9a"/><polygon points="0,3 8,0 14,2 6,5" fill="#fff"/></svg>
<svg class="a" style="left:8.200000000000001px;top:667.1px" width="6.2" height="12.600000000000001"><polygon points="3.1,0 6.2,5.2 0,5.2" fill="#adadad"/><polygon points="0,7.4 6.2,7.4 3.1,12.600000000000001" fill="#adadad"/></svg>
<div class="t " style="left:30.8px;top:668px;font-size:12px;">View</div>
<div class="t " style="left:77px;top:668px;font-size:12px;">Select</div>
<div class="t " style="left:130.3px;top:668px;font-size:12px;">Add</div>
<div class="t " style="left:171.3px;top:668px;font-size:12px;">Object</div>
<div class="a dark" style="left:219px;top:664px;width:118px;height:19.5px;border-radius:4px;"></div>
<svg class="a" style="left:225.5px;top:666.5px;opacity:1" width="14" height="15" viewBox="0 0 14 15"><polygon points="7,0.5 13.5,3.5 13.5,11 7,14.5 0.5,11 0.5,3.5" fill="#e8953a" stroke="#7a4a18" stroke-width="1"/><polygon points="7,0.8 13.2,3.6 7,6.8 0.8,3.6" fill="#fbe3c0"/><polygon points="0.8,3.9 7,7 7,14.2 0.8,10.8" fill="#f3b36a"/><polygon points="7,7 13.2,3.9 13.2,10.8 7,14.2" fill="#d27c22"/></svg>
<div class="t w" style="left:244px;top:669px;font-size:12px;">Object Mode</div>
<svg class="a" style="left:327.9px;top:667.1px" width="6.2" height="12.600000000000001"><polygon points="3.1,0 6.2,5.2 0,5.2" fill="#adadad"/><polygon points="0,7.4 6.2,7.4 3.1,12.600000000000001" fill="#adadad"/></svg>
<div class="a dark" style="left:343px;top:664px;width:35px;height:19.5px;border-radius:4px;"></div>
<svg class="a" style="left:348px;top:667px" width="14" height="14"><defs><radialGradient id="sh" cx="0.35" cy="0.35" r="0.7"><stop offset="0" stop-color="#fff"/><stop offset="0.5" stop-color="#d8a8a0"/><stop offset="1" stop-color="#8a3a30"/></radialGradient></defs><circle cx="7" cy="7" r="6.3" fill="url(#sh)" stroke="#e8e8e8" stroke-width="0.8"/></svg>
<svg class="a" style="left:368.9px;top:667.1px" width="6.2" height="12.600000000000001"><polygon points="3.1,0 6.2,5.2 0,5.2" fill="#adadad"/><polygon points="0,7.4 6.2,7.4 3.1,12.600000000000001" fill="#adadad"/></svg>
<div class="a dark" style="left:383.5px;top:664px;width:35.5px;height:19.5px;border-radius:4px 0 0 4px;"></div>
<svg class="a" style="left:388px;top:667px" width="14" height="14" viewBox="0 0 14 14"><g fill="none" stroke="#e0e0e0" stroke-width="1.4"><path d="M1 4 V1 H4"/><path d="M10 1 H13 V4"/><path d="M13 10 V13 H10"/><path d="M4 13 H1 V10"/></g><circle cx="7" cy="7" r="3" fill="#6aa0e8" stroke="#e8f0ff" stroke-width="1"/></svg>
<svg class="a" style="left:408.9px;top:667.1px" width="6.2" height="12.600000000000001"><polygon points="3.1,0 6.2,5.2 0,5.2" fill="#adadad"/><polygon points="0,7.4 6.2,7.4 3.1,12.600000000000001" fill="#adadad"/></svg>
<div class="a " style="left:418px;top:664px;width:21px;height:19.5px;border:1px solid #2b2b2b;border-radius:0 4px 4px 0;background:linear-gradient(#a8a8a8,#949494);"></div>
<svg class="a" style="left:421px;top:666px" width="16" height="16" viewBox="0 0 16 16"><g fill="none" stroke="#5a8ad8" stroke-width="1"><circle cx="3" cy="3.500" r="1.600"/><circle cx="8" cy="3.500" r="1.600"/><circle cx="13" cy="3.500" r="1.600"/></g><path d="M5 8 L2 11 L5 14 M11 8 L14 11 L11 14" fill="none" stroke="#fff" stroke-width="1.800"/></svg>
<div class="a dark" style="left:444px;top:664px;width:20.5px;height:19.5px;border-radius:4px 0 0 4px;"></div>
<svg class="a" style="left:446px;top:666px" width="16" height="16" viewBox="0 0 16 16"><path d="M8 9 V1" stroke="#5a8af0" stroke-width="2"/><path d="M8 9 L1 14" stroke="#e84a3a" stroke-width="2"/><path d="M8 9 L15 14" stroke="#6ad84a" stroke-width="2"/></svg>
<div class="a " style="left:464px;top:664px;width:21px;height:19.5px;border:1px solid #1f1f1f;background:linear-gradient(#5a86c8,#6a98dc)"></div>
<svg class="a" style="left:466px;top:666px" width="16" height="16" viewBox="0 0 16 16"><polygon points="1.500,13 3,14.500 9.500,8 11.500,10 13.500,2.500 6,4.500 8,6.500" fill="#86b0ee" stroke="#1a2a4c" stroke-width="1.100" stroke-linejoin="round"/></svg>
<div class="a dark" style="left:484.5px;top:664px;width:21px;height:19.5px;border-radius:0;"></div>
<svg class="a" style="left:487px;top:666px" width="16" height="16" viewBox="0 0 16 16"><path d="M2 14 C2 8 6 3 13 3" fill="none" stroke="#4a6a9a" stroke-width="2.200"/></svg>
<div class="a dark" style="left:504.5px;top:664px;width:21px;height:19.5px;border-radius:0;"></div>
<svg class="a" style="left:507px;top:666px" width="16" height="16" viewBox="0 0 16 16"><path d="M2 14 L9 7" stroke="#4a6a9a" stroke-width="2.200"/><rect x="8" y="2" width="6" height="6" fill="#4a6a9a"/></svg>
<div class="a dark" style="left:524.5px;top:664px;width:75.5px;height:19.5px;border-radius:0 4px 4px 0;"></div>
<div class="t w" style="left:532.8px;top:669px;font-size:12px;">Global</div>
<svg class="a" style="left:590.9px;top:667.1px" width="6.2" height="12.600000000000001"><polygon points="3.1,0 6.2,5.2 0,5.2" fill="#adadad"/><polygon points="0,7.4 6.2,7.4 3.1,12.600000000000001" fill="#adadad"/></svg>
<div class="a " style="left:606px;top:664.0px;width:11px;height:10.75px;border:1px solid #4a4a4a;border-radius:4px 0 0 0;background:#939393"></div>
<div class="a " style="left:616px;top:664.0px;width:11px;height:10.75px;border:1px solid #4a4a4a;border-radius:0;background:#939393"></div>
<div class="a " style="left:626px;top:664.0px;width:11px;height:10.75px;border:1px solid #4a4a4a;border-radius:0;background:#939393"></div>
<div class="a " style="left:636px;top:664.0px;width:11px;height:10.75px;border:1px solid #4a4a4a;border-radius:0;background:#939393"></div>
<div class="a " style="left:646px;top:664.0px;width:10px;height:10.75px;border:1px solid #4a4a4a;border-radius:0 4px 0 0;background:#939393"></div>
<div class="a " style="left:606px;top:673.75px;width:11px;height:9.75px;border:1px solid #4a4a4a;border-radius:0 0 0 4px;background:#939393"></div>
<div class="a " style="left:616px;top:673.75px;width:11px;height:9.75px;border:1px solid #4a4a4a;border-radius:0;background:#939393"></div>
<div class="a " style="left:626px;top:673.75px;width:11px;height:9.75px;border:1px solid #4a4a4a;border-radius:0;background:#939393"></div>
<div class="a " style="left:636px;top:673.75px;width:11px;height:9.75px;border:1px solid #4a4a4a;border-radius:0;background:#939393"></div>
<div class="a " style="left:646px;top:673.75px;width:10px;height:9.75px;border:1px solid #4a4a4a;border-radius:0 0 4px 0;background:#939393"></div>
<svg class="a" style="left:608px;top:666px" width="7" height="17"><circle cx="3.500" cy="3" r="2" fill="#4a4a4a" stroke="#333" stroke-width="0.600"/><circle cx="3.500" cy="12.700" r="2" fill="#f0a030" stroke="#5a3a10" stroke-width="0.600"/></svg>
<div class="a " style="left:661.5px;top:664.0px;width:11px;height:10.75px;border:1px solid #4a4a4a;border-radius:4px 0 0 0;background:#939393"></div>
<div class="a " style="left:671.5px;top:664.0px;width:11px;height:10.75px;border:1px solid #4a4a4a;border-radius:0;background:#939393"></div>
<div class="a " style="left:681.5px;top:664.0px;width:11px;height:10.75px;border:1px solid #4a4a4a;border-radius:0;background:#939393"></div>
<div class="a " style="left:691.5px;top:664.0px;width:11px;height:10.75px;border:1px solid #4a4a4a;border-radius:0;background:#939393"></div>
<div class="a " style="left:701.5px;top:664.0px;width:10px;height:10.75px;border:1px solid #4a4a4a;border-radius:0 4px 0 0;background:#939393"></div>
<div class="a " style="left:661.5px;top:673.75px;width:11px;height:9.75px;border:1px solid #4a4a4a;border-radius:0 0 0 4px;background:#939393"></div>
<div class="a " style="left:671.5px;top:673.75px;width:11px;height:9.75px;border:1px solid #4a4a4a;border-radius:0;background:#939393"></div>
<div class="a " style="left:681.5px;top:673.75px;width:11px;height:9.75px;border:1px solid #4a4a4a;border-radius:0;background:#939393"></div>
<div class="a " style="left:691.5px;top:673.75px;width:11px;height:9.75px;border:1px solid #4a4a4a;border-radius:0;background:#939393"></div>
<div class="a " style="left:701.5px;top:673.75px;width:10px;height:9.75px;border:1px solid #4a4a4a;border-radius:0 0 4px 0;background:#939393"></div>
<div class="a " style="left:717.5px;top:664px;width:20.5px;height:19.5px;border:1px solid #2b2b2b;border-radius:4px;background:linear-gradient(#a8a8a8,#8e8e8e);"></div>
<svg class="a" style="left:720px;top:666px" width="16" height="16" viewBox="0 0 16 16"><rect x="1" y="2" width="9" height="9" fill="#e8e8e8" stroke="#444" stroke-width="1"/><path d="M10 6 a2.500 2.500 0 1 1 0 5 M10 9 a2.500 2.500 0 1 0 0 5" fill="none" stroke="#fff" stroke-width="1.600"/></svg>
<div class="a " style="left:742.5px;top:664px;width:20.5px;height:19.5px;border:1px solid #2b2b2b;border-radius:4px;background:linear-gradient(#a8a8a8,#8e8e8e);"></div>
<svg class="a" style="left:745px;top:666px" width="16" height="16" viewBox="0 0 16 16"><circle cx="8" cy="8" r="6" fill="none" stroke="#c8c8c8" stroke-width="1.500"/><circle cx="8" cy="8" r="3" fill="none" stroke="#c8c8c8" stroke-width="1.200"/></svg>
<div class="a " style="left:768px;top:664px;width:21.5px;height:19.5px;border:1px solid #2b2b2b;border-radius:4px 0 0 4px;background:linear-gradient(#a8a8a8,#8e8e8e);"></div>
<svg class="a" style="left:771px;top:666px" width="16" height="16" viewBox="0 0 16 16"><path d="M3 13 L9 6 a3 3 0 0 1 4.500 4.500 L7 16" fill="none" stroke="#c8c8c8" stroke-width="2.500" transform="translate(0,-2)"/></svg>
<div class="a dark" style="left:789px;top:664px;width:35px;height:19.5px;border-radius:0;"></div>
<svg class="a" style="left:792px;top:667px" width="18" height="14" viewBox="0 0 18 14"><path d="M1 7 H17 M3 4 V10 M15 4 V10" stroke="#e8e8e8" stroke-width="1.400"/><path d="M9 1 V13" stroke="#6aa8ff" stroke-width="2.400"/></svg>
<svg class="a" style="left:813.9px;top:667.1px" width="6.2" height="12.600000000000001"><polygon points="3.1,0 6.2,5.2 0,5.2" fill="#adadad"/><polygon points="0,7.4 6.2,7.4 3.1,12.600000000000001" fill="#adadad"/></svg>
<div class="a " style="left:823.5px;top:664px;width:20.5px;height:19.5px;border:1px solid #2b2b2b;border-radius:0 4px 4px 0;background:linear-gradient(#a8a8a8,#8e8e8e);"></div>
<svg class="a" style="left:826px;top:666px" width="16" height="16" viewBox="0 0 16 16"><circle cx="6" cy="5" r="3.500" fill="#fff" stroke="#3a6ad0" stroke-width="1.600"/><path d="M9 8 H15 M9 11 H15 M9 14 H15 M10 7 V15 M13 7 V15" stroke="#555" stroke-width="1"/></svg>
<div class="a " style="left:848.5px;top:664px;width:21px;height:19.5px;border:1px solid #2b2b2b;border-radius:4px 0 0 4px;background:linear-gradient(#a8a8a8,#8e8e8e);"></div>
<svg class="a" style="left:851px;top:666px" width="17" height="16" viewBox="0 0 17 16"><rect x="1" y="5" width="14" height="9" rx="1" fill="#e8e8e8" stroke="#222" stroke-width="1.200"/><rect x="3" y="3" width="4" height="2" fill="#222"/><circle cx="8" cy="9.500" r="3" fill="#333" stroke="#c85a6a" stroke-width="1"/><circle cx="14" cy="3" r="1.800" fill="#f8e870"/></svg>
<div class="a " style="left:869px;top:664px;width:21px;height:19.5px;border:1px solid #2b2b2b;border-radius:0 4px 4px 0;background:linear-gradient(#a8a8a8,#8e8e8e);"></div>
<svg class="a" style="left:871px;top:666px" width="17" height="16" viewBox="0 0 17 16"><rect x="1" y="7" width="14" height="8" fill="#222" stroke="#eee" stroke-width="0.800"/><path d="M1 6 L15 2" stroke="#eee" stroke-width="3"/><path d="M3 5.600 L5 5 M7 4.500 L9 3.900 M11 3.400 L13 2.800" stroke="#222" stroke-width="3"/><rect x="2" y="9" width="5" height="2" fill="#6aa0e8"/></svg>
<div class="a " style="left:0px;top:687.5px;width:1001px;height:1.8px;background:#2a2a2a"></div>
<div class="a " style="left:0px;top:689px;width:1001px;height:31px;background:#454545"></div>
<div class="a " style="left:155.5px;top:689px;width:536.7px;height:31px;background:#727272"></div>
<div class="a " style="left:2px;top:689px;width:1px;height:31px;background:#404040"></div>
<div class="a " style="left:32px;top:689px;width:1px;height:31px;background:#3a3a3a"></div>
<div class="a " style="left:62px;top:689px;width:1px;height:31px;background:#404040"></div>
<div class="a " style="left:92px;top:689px;width:1px;height:31px;background:#3a3a3a"></div>
<div class="a " style="left:122px;top:689px;width:1px;height:31px;background:#404040"></div>
<div class="a " style="left:152px;top:689px;width:1px;height:31px;background:#626262"></div>
<div class="a " style="left:182px;top:689px;width:1px;height:31px;background:#6a6a6a"></div>
<div class="a " style="left:212px;top:689px;width:1px;height:31px;background:#626262"></div>
<div class="a " style="left:242px;top:689px;width:1px;height:31px;background:#6a6a6a"></div>
<div class="a " style="left:272px;top:689px;width:1px;height:31px;background:#626262"></div>
<div class="a " style="left:302px;top:689px;width:1px;height:31px;background:#6a6a6a"></div>
<div class="a " style="left:332px;top:689px;width:1px;height:31px;background:#626262"></div>
<div class="a " style="left:362px;top:689px;width:1px;height:31px;background:#6a6a6a"></div>
<div class="a " style="left:392px;top:689px;width:1px;height:31px;background:#626262"></div>
<div class="a " style="left:422px;top:689px;width:1px;height:31px;background:#6a6a6a"></div>
<div class="a " style="left:452px;top:689px;width:1px;height:31px;background:#626262"></div>
<div class="a " style="left:482px;top:689px;width:1px;height:31px;background:#6a6a6a"></div>
<div class="a " style="left:512px;top:689px;width:1px;height:31px;background:#626262"></div>
<div class="a " style="left:542px;top:689px;width:1px;height:31px;background:#6a6a6a"></div>
<div class="a " style="left:572px;top:689px;width:1px;height:31px;background:#626262"></div>
<div class="a " style="left:602px;top:689px;width:1px;height:31px;background:#6a6a6a"></div>
<div class="a " style="left:632px;top:689px;width:1px;height:31px;background:#626262"></div>
<div class="a " style="left:662px;top:689px;width:1px;height:31px;background:#6a6a6a"></div>
<div class="a " style="left:692px;top:689px;width:1px;height:31px;background:#626262"></div>
<div class="a " style="left:722px;top:689px;width:1px;height:31px;background:#404040"></div>
<div class="a " style="left:752px;top:689px;width:1px;height:31px;background:#3a3a3a"></div>
<div class="a " style="left:782px;top:689px;width:1px;height:31px;background:#404040"></div>
<div class="a " style="left:812px;top:689px;width:1px;height:31px;background:#3a3a3a"></div>
<div class="a " style="left:842px;top:689px;width:1px;height:31px;background:#404040"></div>
<div class="a " style="left:872px;top:689px;width:1px;height:31px;background:#3a3a3a"></div>
<div class="a " style="left:902px;top:689px;width:1px;height:31px;background:#404040"></div>
<div class="a " style="left:932px;top:689px;width:1px;height:31px;background:#3a3a3a"></div>
<div class="a " style="left:962px;top:689px;width:1px;height:31px;background:#404040"></div>
<div class="a " style="left:992px;top:689px;width:1px;height:31px;background:#3a3a3a"></div>
<div class="a " style="left:150.7px;top:689px;width:3.3px;height:31px;background:#5fc645"></div>
<div class="a " style="left:0px;top:720px;width:1001px;height:13px;background:#727272"></div>
<div class="a " style="left:-10px;top:720px;width:1007px;height:12.5px;background:linear-gradient(#9e9e9e,#848484);border-radius:0 6.5px 6.5px 0"></div>
<div class="a " style="left:0px;top:732.5px;width:992px;height:1px;background:#4e4e4e"></div>
<div class="a " style="left:0px;top:733.5px;width:1001px;height:4px;background:#7b7b7b"></div>
<div class="t" style="left:17.0px;width:40px;text-align:center;top:719px;font-size:11.5px;letter-spacing:0.6px">-40</div>
<div class="t" style="left:77.0px;width:40px;text-align:center;top:719px;font-size:11.5px;letter-spacing:0.6px">-20</div>
<div class="t" style="left:137.0px;width:40px;text-align:center;top:719px;font-size:11.5px;letter-spacing:0.6px">0</div>
<div class="t" style="left:197.0px;width:40px;text-align:center;top:719px;font-size:11.5px;letter-spacing:0.6px">20</div>
<div class="t" style="left:257.0px;width:40px;text-align:center;top:719px;font-size:11.5px;letter-spacing:0.6px">40</div>
<div class="t" style="left:317.0px;width:40px;text-align:center;top:719px;font-size:11.5px;letter-spacing:0.6px">60</div>
<div class="t" style="left:377.0px;width:40px;text-align:center;top:719px;font-size:11.5px;letter-spacing:0.6px">80</div>
<div class="t" style="left:437.0px;width:40px;text-align:center;top:719px;font-size:11.5px;letter-spacing:0.6px">100</div>
<div class="t" style="left:497.0px;width:40px;text-align:center;top:719px;font-size:11.5px;letter-spacing:0.6px">120</div>
<div class="t" style="left:557.0px;width:40px;text-align:center;top:719px;font-size:11.5px;letter-spacing:0.6px">140</div>
<div class="t" style="left:617.0px;width:40px;text-align:center;top:719px;font-size:11.5px;letter-spacing:0.6px">160</div>
<div class="t" style="left:677.0px;width:40px;text-align:center;top:719px;font-size:11.5px;letter-spacing:0.6px">180</div>
<div class="t" style="left:737.0px;width:40px;text-align:center;top:719px;font-size:11.5px;letter-spacing:0.6px">200</div>
<div class="t" style="left:797.0px;width:40px;text-align:center;top:719px;font-size:11.5px;letter-spacing:0.6px">220</div>
<div class="t" style="left:857.0px;width:40px;text-align:center;top:719px;font-size:11.5px;letter-spacing:0.6px">240</div>
<div class="t" style="left:917.0px;width:40px;text-align:center;top:719px;font-size:11.5px;letter-spacing:0.6px">260</div>
<svg class="a" style="left:986px;top:721px" width="12" height="12"><circle cx="6" cy="5.7" r="4.3" fill="#6a6a6a" stroke="#5a5a5a" stroke-width="0.8"/></svg>
<svg class="a" style="left:988px;top:689px" width="13" height="13"><path d="M2 0 L13 11 M6 0 L13 7" stroke="#2e2e2e" stroke-width="1"/><path d="M3.2 0 L13 9.800 M7.200 0 L13 5.800" stroke="#6a6a6a" stroke-width="0.800"/></svg>
<div class="a " style="left:0px;top:737.5px;width:1001px;height:26.5px;background:#727272"></div>
<div class="a dark" style="left:-8px;top:741px;width:25.5px;height:19.5px;border-radius:4px;"></div>
<svg class="a" style="left:-7px;top:744px" width="14" height="14"><circle cx="7" cy="7" r="6" fill="#f4f4f4" stroke="#888" stroke-width="1"/><path d="M7 7 L3 4" stroke="#d03030" stroke-width="1.500"/></svg>
<svg class="a" style="left:8.200000000000001px;top:744.1px" width="6.2" height="12.600000000000001"><polygon points="3.1,0 6.2,5.2 0,5.2" fill="#adadad"/><polygon points="0,7.4 6.2,7.4 3.1,12.600000000000001" fill="#adadad"/></svg>
<div class="t " style="left:30.6px;top:745px;font-size:12px;">View</div>
<div class="t " style="left:77px;top:745px;font-size:12px;">Marker</div>
<div class="t " style="left:134.5px;top:745px;font-size:12px;">Frame</div>
<div class="t " style="left:188.7px;top:745px;font-size:12px;">Playback</div>
<div class="a " style="left:250.5px;top:741px;width:20px;height:19.5px;border:1px solid #2b2b2b;border-radius:4px 0 0 4px;background:linear-gradient(#a8a8a8,#8e8e8e);"></div>
<svg class="a" style="left:253px;top:743.5px" width="15" height="15" viewBox="0 0 15 15"><circle cx="7.500" cy="7.500" r="6" fill="#f4f4f4" stroke="#333" stroke-width="1.200"/><path d="M7.500 7.500 L7.500 1.500 A6 6 0 0 1 13.500 7.500 Z" fill="#f0a030"/><path d="M7.500 7.500 L10 11" stroke="#d03030" stroke-width="1.200"/></svg>
<div class="a " style="left:269.5px;top:741px;width:20px;height:19.5px;border:1px solid #2b2b2b;border-radius:0 4px 4px 0;background:linear-gradient(#a8a8a8,#8e8e8e);"></div>
<svg class="a" style="left:273px;top:743.5px" width="13" height="15" viewBox="0 0 13 15"><path d="M3.500 7 V4.500 a3 3 0 0 1 6 0 V7" fill="none" stroke="#f0f0f0" stroke-width="1.600"/><rect x="1.500" y="7" width="10" height="7" fill="#f0f0f0" stroke="#555" stroke-width="0.800"/><rect x="6" y="9" width="1.200" height="3" fill="#555"/></svg>
<div class="a num" style="left:296px;top:741px;width:120px;height:19.5px;border-radius:10px 0 0 10px;"></div>
<div class="t " style="left:312.5px;top:745px;font-size:12px;">Start:</div>
<div class="t " style="right:623.8px;top:745px;font-size:12px;letter-spacing:0.3px;">1</div>
<svg class="a" style="left:303px;top:748px" width="4" height="6"><polygon points="4,0 4,6 0,3" fill="#777"/></svg>
<svg class="a" style="left:405px;top:748px" width="4" height="6"><polygon points="0,0 0,6 4,3" fill="#777"/></svg>
<div class="a num" style="left:415.5px;top:741px;width:114.5px;height:19.5px;border-radius:0 10px 10px 0;"></div>
<div class="t " style="left:432.0px;top:745px;font-size:12px;">End:</div>
<div class="t " style="right:509.79999999999995px;top:745px;font-size:12px;letter-spacing:0.3px;">180</div>
<svg class="a" style="left:422.5px;top:748px" width="4" height="6"><polygon points="4,0 4,6 0,3" fill="#777"/></svg>
<svg class="a" style="left:519.0px;top:748px" width="4" height="6"><polygon points="0,0 0,6 4,3" fill="#777"/></svg>
<div class="a num" style="left:536.5px;top:741px;width:90px;height:19.5px;border-radius:10px;"></div>
<div class="t " style="right:413.29999999999995px;top:745px;font-size:12px;letter-spacing:0.3px;">0</div>
<svg class="a" style="left:543.5px;top:748px" width="4" height="6"><polygon points="4,0 4,6 0,3" fill="#777"/></svg>
<svg class="a" style="left:615.5px;top:748px" width="4" height="6"><polygon points="0,0 0,6 4,3" fill="#777"/></svg>
<div class="a " style="left:645px;top:741px;width:21.5px;height:19.5px;border:1px solid #2b2b2b;border-radius:4px 0 0 4px;background:linear-gradient(#a8a8a8,#8e8e8e);"></div>
<svg class="a" style="left:0;top:0" width="1024" height="780"><rect x="648.75" y="745.75" width="1.800" height="10" stroke="#333" stroke-width="0.900" fill="#f4f4f4"/><polygon points="656.25,745.75 656.25,755.75 650.25,750.75" stroke="#333" stroke-width="0.900" fill="#f4f4f4"/><polygon points="662.25,745.75 662.25,755.75 656.25,750.75" stroke="#333" stroke-width="0.900" fill="#f4f4f4"/></svg>
<div class="a " style="left:665.5px;top:741px;width:20.5px;height:19.5px;border:1px solid #2b2b2b;border-radius:0;background:linear-gradient(#a8a8a8,#8e8e8e);"></div>
<svg class="a" style="left:0;top:0" width="1024" height="780"><polygon points="675.25,745.75 675.25,755.75 669.25,750.75" stroke="#333" stroke-width="0.900" fill="#f4f4f4"/><polygon points="681.25,745.75 681.25,755.75 675.25,750.75" stroke="#333" stroke-width="0.900" fill="#f4f4f4"/></svg>
<div class="a " style="left:685px;top:741px;width:21px;height:19.5px;border:1px solid #2b2b2b;border-radius:0;background:linear-gradient(#a8a8a8,#8e8e8e);"></div>
<svg class="a" style="left:0;top:0" width="1024" height="780"><polygon points="700.5,744.25 700.5,757.25 689.5,750.75" stroke="#333" stroke-width="0.900" fill="#f4f4f4"/></svg>
<div class="a " style="left:705px;top:741px;width:21px;height:19.5px;border:1px solid #2b2b2b;border-radius:0;background:linear-gradient(#a8a8a8,#8e8e8e);"></div>
<svg class="a" style="left:0;top:0" width="1024" height="780"><polygon points="710.5,744.25 710.5,757.25 721.5,750.75" stroke="#333" stroke-width="0.900" fill="#f4f4f4"/></svg>
<div class="a " style="left:725px;top:741px;width:21px;height:19.5px;border:1px solid #2b2b2b;border-radius:0;background:linear-gradient(#a8a8a8,#8e8e8e);"></div>
<svg class="a" style="left:0;top:0" width="1024" height="780"><polygon points="729.5,745.75 729.5,755.75 735.5,750.75" stroke="#333" stroke-width="0.900" fill="#f4f4f4"/><polygon points="735.5,745.75 735.5,755.75 741.5,750.75" stroke="#333" stroke-width="0.900" fill="#f4f4f4"/></svg>
<div class="a " style="left:745px;top:741px;width:20px;height:19.5px;border:1px solid #2b2b2b;border-radius:0 4px 4px 0;background:linear-gradient(#a8a8a8,#8e8e8e);"></div>
<svg class="a" style="left:0;top:0" width="1024" height="780"><polygon points="748.5,745.75 748.5,755.75 754.5,750.75" stroke="#333" stroke-width="0.900" fill="#f4f4f4"/><polygon points="754.5,745.75 754.5,755.75 760.5,750.75" stroke="#333" stroke-width="0.900" fill="#f4f4f4"/><rect x="760.5" y="745.75" width="1.800" height="10" stroke="#333" stroke-width="0.900" fill="#f4f4f4"/></svg>
<div class="a dark" style="left:771px;top:741px;width:120.5px;height:19.5px;border-radius:4px;"></div>
<div class="t w" style="left:779px;top:745px;font-size:12px;">No Sync</div>
<svg class="a" style="left:882.9px;top:744.1px" width="6.2" height="12.600000000000001"><polygon points="3.1,0 6.2,5.2 0,5.2" fill="#adadad"/><polygon points="0,7.4 6.2,7.4 3.1,12.600000000000001" fill="#adadad"/></svg>
<div class="a " style="left:909.5px;top:741px;width:19.5px;height:19.5px;border:1px solid #2b2b2b;border-radius:4px;background:linear-gradient(#a8a8a8,#8e8e8e);"></div>
<svg class="a" style="left:913.500px;top:745px" width="12" height="12"><circle cx="6" cy="6" r="4.500" fill="#e03a20" stroke="#7a1a10" stroke-width="0.800"/></svg>
<div class="a dark" style="left:934px;top:741px;width:35px;height:19.5px;border-radius:4px;"></div>
<svg class="a" style="left:940px;top:745px" width="12" height="12"><polygon points="6,1 11,6 6,11 1,6" fill="#f0a830" stroke="#fff" stroke-width="0.800"/></svg>
<svg class="a" style="left:959.9px;top:744.1px" width="6.2" height="12.600000000000001"><polygon points="3.1,0 6.2,5.2 0,5.2" fill="#adadad"/><polygon points="0,7.4 6.2,7.4 3.1,12.600000000000001" fill="#adadad"/></svg>
<div class="a " style="left:975.5px;top:741px;width:25px;height:19.5px;border:1px solid #2b2b2b;border-radius:4px;background:linear-gradient(#a8a8a8,#8e8e8e);"></div>
<svg class="a" style="left:980px;top:743px" width="18" height="16" viewBox="0 0 18 16"><path d="M5 2 V12 M5 3 H8 M5 6 H8" stroke="#d8c030" stroke-width="2"/><circle cx="5" cy="13" r="2" fill="none" stroke="#d8c030" stroke-width="1.600"/><path d="M7 13 L15 7" stroke="#f0f0f0" stroke-width="2.200"/><circle cx="15" cy="6" r="2" fill="none" stroke="#f0f0f0" stroke-width="1.600"/></svg>
<div class="a " style="left:0px;top:763.5px;width:1024px;height:17px;background:linear-gradient(#7d7a78,#8c8987)"></div>
<div class="a " style="left:3px;top:764px;width:49px;height:8.5px;background:#5c9bb9"></div>
<div class="a " style="left:92.5px;top:764px;width:48px;height:11.5px;background:#5c9bb9"></div>
<div class="a " style="left:177.5px;top:764px;width:50.5px;height:13.5px;background:linear-gradient(#b4b4b4,#c8c8c8);border:1px solid #6e6e6e;border-top:none"></div>
<div class="a " style="left:957px;top:763.5px;width:67px;height:17px;background:linear-gradient(90deg,#4e4e4e,#8a8886)"></div>
<div class="a " style="left:299.5px;top:763.5px;width:657.5px;height:20px;background:#b6b0ad;border-radius:5px 5px 0 0;border-top:1px solid #d0ccca"></div>
<div class="a " style="left:0px;top:763.5px;width:300px;height:9px;background:linear-gradient(rgba(0,0,0,0.38),rgba(0,0,0,0))"></div>
<svg class="a" style="left:0;top:763px" width="1024" height="17" viewBox="0 763 1024 17"><rect x="306.500" y="771.500" width="15.500" height="10" fill="#3aa6ea"/><rect x="322" y="771.500" width="15" height="10" fill="#f0f2f4"/><rect x="313" y="776" width="1.500" height="4" fill="#1a4a7a"/><rect x="329" y="776" width="1.500" height="4" fill="#1a4a7a"/><circle cx="362.300" cy="785" r="15.800" fill="#c4ccd0" stroke="#8a9298" stroke-width="1"/><path d="M356 781 L370 773 L366 781 Z" fill="#3a4248"/><circle cx="401.700" cy="784.500" r="15.800" fill="#de4b3c"/><circle cx="401.700" cy="784.500" r="7" fill="#f4f4f4"/><path d="M388 780 L396 781 L392 790 Z" fill="#3aa757"/><path d="M408 778 L418 780 L414 790 Z" fill="#f6c334"/><g fill="#1f8ce6"><polygon points="433.500,768.500 442.500,774.500 433.500,780.500 424.500,774.500"/><polygon points="451.500,768.500 460.500,774.500 451.500,780.500 442.500,774.500"/></g><polygon points="433.500,771 438,774.500 433.500,778" fill="#0f6cc0" opacity="0.500"/><circle cx="480" cy="784.500" r="15.800" fill="#f6f6f4"/><ellipse cx="474" cy="779.500" rx="4.500" ry="5.500" fill="#f08a2a"/><ellipse cx="480.500" cy="777.500" rx="4" ry="5" fill="#f6b030" opacity="0.900"/><ellipse cx="487" cy="779.500" rx="4.500" ry="5" fill="#f0d83a" opacity="0.900"/><ellipse cx="470.500" cy="783" rx="4" ry="4" fill="#e8503a" opacity="0.900"/><circle cx="521.800" cy="786.500" r="16" fill="#4ab2f6"/><rect x="543" y="771.300" width="30" height="20" rx="5" fill="#3edb62"/><rect x="552" y="777.500" width="12" height="5" rx="1.500" fill="#e8fbe8"/><polygon points="584,771 610,768.500 613.500,768.500 613.500,781 584,781" fill="#f4f4f2"/><polygon points="584,771 611,768.500 611.500,773 585,775.500" fill="#f0922c"/><rect x="588" y="777" width="16" height="4" fill="#3a7ad8"/><polygon points="611,768.500 614,768.500 610,781 607.500,781" fill="#e8a860"/><polygon points="641.500,767.800 645.500,776.500 654,778 648,781 632,781 636.500,777" fill="#8a4cd0"/><rect x="660" y="767.500" width="37.500" height="14" fill="#e4dc6c" stroke="#141414" stroke-width="1.500"/><path d="M662 772 L668 768 M666 777 L678 768 M684 772 L690 768 M690 775 L697 769" stroke="#141414" stroke-width="1.500"/><circle cx="680" cy="782" r="9" fill="#7a9ccc" stroke="#141414" stroke-width="1.500"/><circle cx="682" cy="783" r="3.500" fill="#e4dc6c" stroke="#141414" stroke-width="1"/><rect x="702.500" y="771.200" width="32" height="10" fill="#cfdfe9"/><circle cx="718.500" cy="783" r="9" fill="#1a1a1a"/><circle cx="718.500" cy="783" r="6" fill="none" stroke="#c8c8c8" stroke-width="1.200" stroke-dasharray="1.500 1.500"/><circle cx="757.400" cy="785" r="15" fill="#fafafa" stroke="#ee4f74" stroke-width="2.200"/><polygon points="752,779 765,775 765,780 752,781" fill="#f0407a"/><path d="M797 768 L798.500 768 L798 780 L796 780 Z" fill="#5a3a20"/><rect x="789" y="777.500" width="18" height="4" fill="#c8a878"/><polygon points="836,772.500 849,780 849,781 826,781 826,778.500 838,778.500 832,775" fill="#f28a2c"/><rect x="866" y="769" width="1" height="12" fill="#6a6462"/><rect x="883.500" y="768" width="24" height="12" fill="#f4f4f4"/><rect x="893" y="769.500" width="6" height="7" fill="#5a6a7a"/><rect x="900" y="769.500" width="6" height="7" fill="#8a9098"/><rect x="879.500" y="775.500" width="31.500" height="6" rx="1.500" fill="#6ab6ea"/><path d="M921.500 772 Q934.500 769 948 772 L947 781 L922.500 781 Z" fill="#e4e4e4" stroke="#c8c8c8" stroke-width="0.800"/><ellipse cx="934.700" cy="772.300" rx="13" ry="1.800" fill="#f4f4f4"/></svg>
<div class="a " style="left:997.5px;top:74px;width:3.5px;height:586px;background:#757575"></div>
<div class="a " style="left:1001px;top:74px;width:2px;height:690px;background:#2a2a2a"></div>
<div class="a " style="left:1003px;top:74px;width:21px;height:690px;background:#727272"></div>
<svg class="a" style="left:1003px;top:74px" width="21" height="690" viewBox="1003 74 21 690"><rect x="1003" y="99.500" width="21" height="69" fill="#777777"/><rect x="1012.500" y="77.500" width="16" height="19" rx="4" fill="#404040" stroke="#1f1f1f"/><rect x="1016.500" y="80" width="9" height="2.600" fill="#f0b060"/><path d="M1018.500 83 V93 M1018.500 86.500 H1024 M1018.500 90.500 H1024" stroke="#e8e8e8" stroke-width="1" fill="none"/><defs><linearGradient id="hs" x1="0" y1="0" x2="0" y2="1"><stop offset="0" stop-color="#8e8e8e"/><stop offset="1" stop-color="#6a6a6a"/></linearGradient></defs><rect x="1007.500" y="169" width="30" height="13.500" rx="6.700" fill="url(#hs)" stroke="#484848" stroke-width="1"/><path d="M1003.500 176 L1013 185.500 M1003.500 179.500 L1009.500 185.500" stroke="#333" stroke-width="1"/><path d="M1003.500 177.200 L1012 185.700 M1003.500 180.700 L1008.500 185.700" stroke="#8a8a8a" stroke-width="0.800"/><rect x="1003" y="185.500" width="21" height="1.800" fill="#2a2a2a"/><rect x="1012" y="191" width="16" height="19.500" rx="4" fill="#3e3e3e" stroke="#1f1f1f"/><rect x="1017" y="195" width="9" height="3.800" fill="#8c8c8c" stroke="#b4b4b4" stroke-width="0.600"/><rect x="1017" y="202" width="9" height="5" fill="#f8f8f8"/><polygon points="1018,204.500 1020.500,202.700 1020.500,206.300" fill="#111"/><rect x="1003" y="214" width="21" height="0.800" fill="#686868"/><path d="M1013.500 239.500 L1018 234" stroke="#f0f0f0" stroke-width="1.800"/><path d="M1014.500 229.500 L1022 236 L1024 230 L1020 226 Z" fill="#e8e8e8" stroke="#555" stroke-width="0.600"/><path d="M1020 226 L1024 223.500 V233 Z" fill="#d0d0d0"/><rect x="1004" y="250" width="20" height="1" fill="#5e5e5e"/><polygon points="1012.800,258 1020.200,258 1016.500,265" fill="#1a1a1a"/><rect x="1011.500" y="281.500" width="18" height="19" rx="4" fill="#8e8e8e" stroke="#3c3c3c"/><rect x="1016" y="287.500" width="10" height="9.500" fill="#e8e8e8" stroke="#222" stroke-width="0.800"/><rect x="1016.500" y="285.500" width="4" height="2" fill="#111"/><circle cx="1023.500" cy="292.500" r="3" fill="#333" stroke="#c88"/><rect x="1004" y="334" width="20" height="1" fill="#858585"/><polygon points="1013,342.200 1020.400,342.200 1016.700,349.400" fill="#1a1a1a"/><rect x="1011.300" y="365.500" width="18" height="19.200" rx="4" fill="#404040" stroke="#1f1f1f"/><defs><linearGradient id="ng" x1="0" y1="0" x2="0" y2="1"><stop offset="0" stop-color="#a0a0a0"/><stop offset="1" stop-color="#b8b8b8"/></linearGradient><linearGradient id="sl" x1="0" y1="0" x2="0" y2="1"><stop offset="0" stop-color="#808080"/><stop offset="1" stop-color="#6a6a6a"/></linearGradient></defs><path d="M1030 411.500 H1020 a9 9 0 0 0 -8.500 9 V430.500 H1030 Z" fill="url(#ng)" stroke="#2b2b2b"/><rect x="1011.500" y="430.500" width="20" height="19.500" fill="url(#ng)" stroke="#2b2b2b"/><path d="M1030 450 H1011.500 V461 a9 9 0 0 0 8.500 9 H1030 Z" fill="url(#sl)" stroke="#2b2b2b"/><polygon points="1021,418 1021,424 1017.300,421" fill="#7c7c7c"/><polygon points="1021,437.500 1021,443.500 1017.300,440.500" fill="#7c7c7c"/><path d="M1030 493 H1020 a9 9 0 0 0 -8.500 9 V511.500 H1030 Z" fill="url(#ng)" stroke="#2b2b2b"/><path d="M1030 511.500 H1011.500 V522 a9 9 0 0 0 8.500 9 H1030 Z" fill="url(#ng)" stroke="#2b2b2b"/><polygon points="1021,499.500 1021,505.500 1017.300,502.500" fill="#7c7c7c"/><polygon points="1021,518.500 1021,524.500 1017.300,521.500" fill="#7c7c7c"/><rect x="1014.500" y="538" width="14" height="13" rx="3.500" fill="#484848" stroke="#2c2c2c"/><rect x="1004" y="562.500" width="20" height="1" fill="#5e5e5e"/><polygon points="1013,570 1020.200,570 1016.600,577.700" fill="#1a1a1a"/><rect x="1011.300" y="593.500" width="18" height="19" rx="4" fill="#404040" stroke="#1f1f1f"/><rect x="1022" y="599" width="3" height="8" fill="#f0f0f0"/><rect x="1014.500" y="619" width="14" height="13.400" rx="3.500" fill="#484848" stroke="#2c2c2c"/><rect x="1004" y="644.500" width="20" height="1" fill="#5e5e5e"/><polygon points="1012.800,651.700 1020,655.300 1012.800,658.900" fill="#1a1a1a"/><rect x="1004" y="666" width="20" height="1" fill="#5e5e5e"/><polygon points="1013,674 1020.200,674 1016.600,681" fill="#1a1a1a"/><rect x="1014.500" y="701" width="14" height="12.600" rx="3.500" fill="#484848" stroke="#2c2c2c"/><path d="M1017.500 706.5 L1020.500 710 L1025.500 704" fill="none" stroke="#fff" stroke-width="1.800"/><rect x="1014.500" y="722.6" width="14" height="12.600" rx="3.500" fill="#484848" stroke="#2c2c2c"/><path d="M1017.500 728.1 L1020.500 731.6 L1025.500 725.6" fill="none" stroke="#fff" stroke-width="1.800"/><rect x="1014.500" y="745" width="14" height="12.600" rx="3.500" fill="#484848" stroke="#2c2c2c"/><path d="M1017.500 750.5 L1020.500 754 L1025.500 748" fill="none" stroke="#fff" stroke-width="1.800"/><path d="M1003.500 751.500 L1014 762.500 M1003.500 755.500 L1010 762.500" stroke="#333" stroke-width="1"/><path d="M1003.500 752.700 L1013 762.700 M1003.500 756.700 L1009 762.700" stroke="#8a8a8a" stroke-width="0.800"/></svg>
<div class="t " style="left:1019.5px;top:309px;font-size:12px;">D</div>
<div class="t w" style="left:1018.9px;top:369px;font-size:12px;font-weight:bold;">R</div>
<div class="t " style="left:1019.4px;top:394px;font-size:12px;">R</div>
<div class="t " style="left:1018.9px;top:475px;font-size:12px;">A</div>
<div class="a " style="left:957px;top:763.5px;width:67px;height:17px;background:linear-gradient(90deg,#4e4e4e,#8a8886)"></div>
</div></body></html>
